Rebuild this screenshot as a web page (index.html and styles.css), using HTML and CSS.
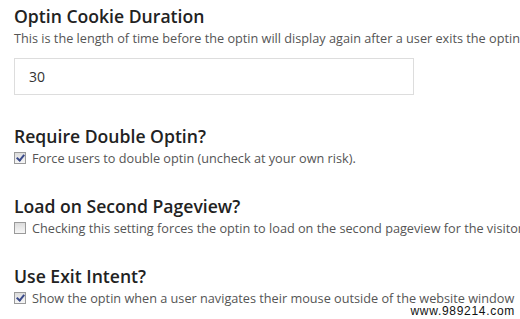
FILE: index.html
```html
<!DOCTYPE html>
<html>
<head>
<meta charset="utf-8">
<link rel="stylesheet" href="styles.css">
</head>
<body>
<div class="page">
  <section class="field first">
    <h2 class="title">Optin Cookie Duration</h2>
    <p class="desc">This is the length of time before the optin will display again after a user exits the optin</p>
    <div class="input">30</div>
  </section>
  <section class="field">
    <h2 class="title">Require Double Optin?</h2>
    <label class="check"><span class="box on"></span>Force users to double optin (uncheck at your own risk).</label>
  </section>
  <section class="field">
    <h2 class="title">Load on Second Pageview?</h2>
    <label class="check"><span class="box"></span>Checking this setting forces the optin to load on the second pageview for the visitor</label>
  </section>
  <section class="field">
    <h2 class="title">Use Exit Intent?</h2>
    <label class="check"><span class="box on"></span>Show the optin when a user navigates their mouse outside of the website window</label>
  </section>
  <div class="watermark">www.989214.com</div>
</div>
</body>
</html>
```
FILE: styles.css
```css
html, body {
  margin: 0;
  padding: 0;
  background: #fff;
  overflow: hidden;
}
.page {
  width: 520px;
  height: 319px;
  padding: 0 0 0 14px;
  box-sizing: border-box;
  font-family: "Open Sans", sans-serif;
  position: relative;
  overflow: hidden;
}
.field {
  margin-top: 26px;
}
.field.first {
  margin-top: 4px;
  padding-bottom: 3px;
}
.title {
  margin: 0;
  font-size: 17.6px;
  font-weight: 600;
  color: #222;
  line-height: 24px;
}
.desc {
  margin: 0;
  font-size: 12.7px;
  color: #555;
  line-height: 20px;
  white-space: nowrap;
}
.input {
  margin-top: 10px;
  width: 400px;
  height: 37px;
  border: 1px solid #ddd;
  box-sizing: border-box;
  padding-left: 14px;
  font-size: 14px;
  line-height: 35px;
  color: #333;
}
.check {
  display: flex;
  align-items: center;
  font-size: 12.7px;
  color: #555;
  line-height: 20px;
  white-space: nowrap;
}
.box {
  width: 12px;
  height: 12px;
  border: 1px solid #9a9a9a;
  box-sizing: border-box;
  background: linear-gradient(#dcdcdc, #f6f6f6);
  margin-right: 6px;
  flex: none;
  position: relative;
}
.box.on::after {
  content: "";
  position: absolute;
  left: 3px;
  top: 0px;
  width: 3px;
  height: 6px;
  border: solid #3a4a8a;
  border-width: 0 2px 2px 0;
  transform: rotate(40deg);
}
.watermark {
  position: absolute;
  right: 5px;
  bottom: 1px;
  font-family: "Liberation Sans", Arial, sans-serif;
  font-size: 12px;
  line-height: 14px;
  letter-spacing: 0.7px;
  color: #111;
}
```
